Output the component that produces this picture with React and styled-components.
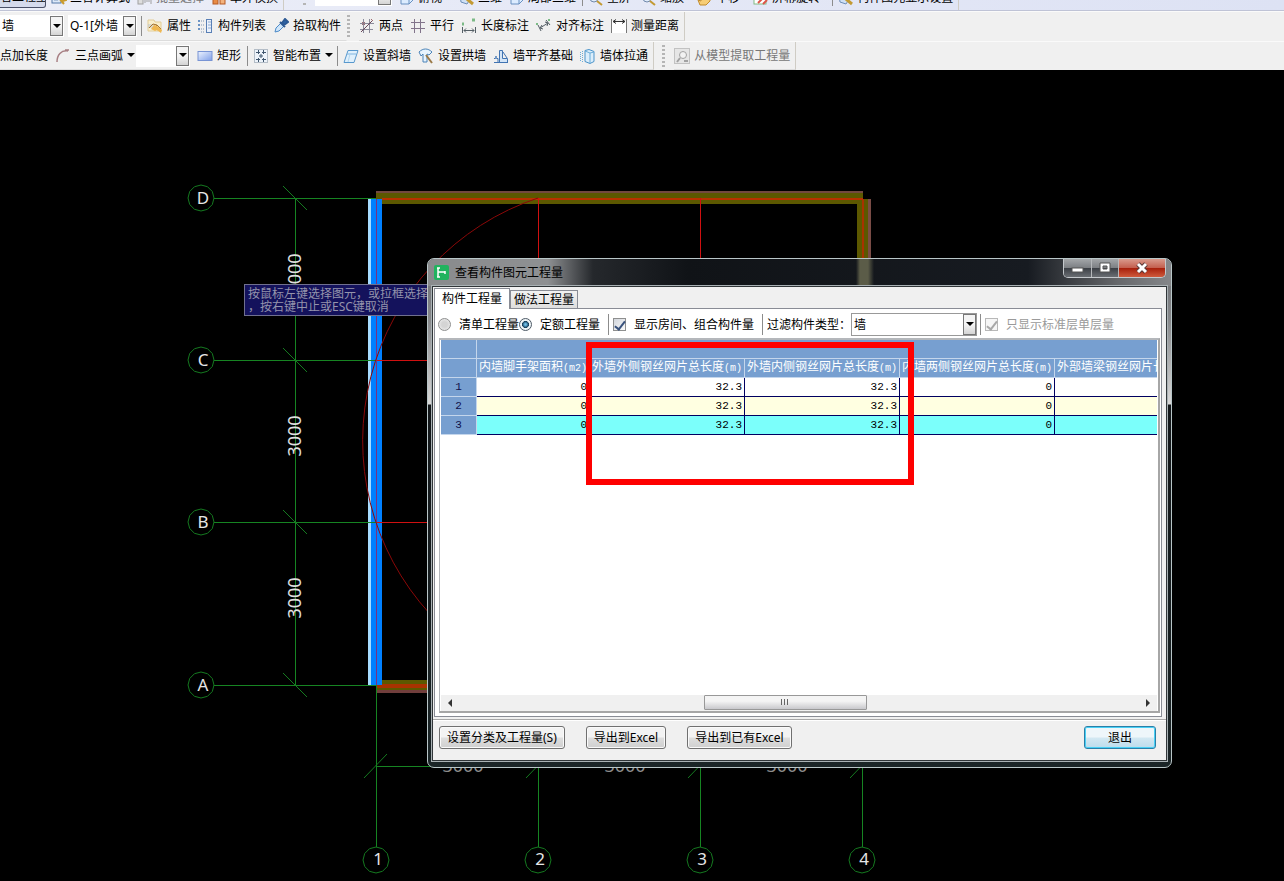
import React, { useState } from "react";
import styled, { createGlobalStyle, css } from "styled-components";

const icons = {
  calc: (
    <>
      <rect x="1" y="4" width="9" height="9" fill="#dce8f8" stroke="#5578a8" />
      <path d="M3 7h5M3 10h4" stroke="#7d97bd" />
      <path d="M8 8l5 6M13 8l2 2-3 1z" stroke="#c99a2c" fill="#f2cf62" strokeWidth="2" />
    </>
  ),
  batch: (
    <>
      <rect x="1" y="8" width="5" height="6" fill="#ddd" stroke="#a0a0a0" />
      <path d="M8 13V9h6v5M9 11h4" stroke="#a0a0a0" fill="none" />
    </>
  ),
  swap: (
    <>
      <rect x="2" y="7" width="5" height="7" fill="#e88b45" stroke="#b65a25" />
      <rect x="9" y="9" width="5" height="5" fill="#f3b37e" stroke="#b65a25" />
    </>
  ),
  cube: <path d="M2 6l5-3h7v7l-4 4H2zM2 6h8v8M10 6l4-3" fill="#dcecff" stroke="#6890c0" />,
  view: (
    <>
      <path d="M1 5l6-2 6 3-5 8-6-2z" fill="#cfe0f5" stroke="#6d8eb8" />
      <path d="M8 9l6 5" stroke="#c39a33" strokeWidth="3" />
    </>
  ),
  magnify: (
    <>
      <circle cx="6" cy="8" r="4" fill="#e2edfa" stroke="#7088ab" />
      <path d="M9 11l5 4" stroke="#c39a33" strokeWidth="2" />
    </>
  ),
  hand: <path d="M3 15l-2-5 3 1V4h2v4l2-5 2 1-1 4 4-2v5l-4 4z" fill="#f6cd76" stroke="#c18b2c" />,
  spin: (
    <>
      <rect x="1" y="5" width="12" height="9" fill="#fff" stroke="#82ba83" />
      <path d="M5 13l8-8M10 14l4-4" stroke="#dd5548" strokeWidth="2" />
    </>
  ),
  property: (
    <>
      <path d="M1 2h6l1 2h6v9H1z" fill="#f9efcd" stroke="#e2cd98" />
      <path d="M1 7h8M1 9h7" stroke="#b9c3ce" />
      <path d="M2 10l4-4 4 1 4 4M10 7l-2 3 3 2" stroke="#a9742a" />
      <path d="M4 11l3-4 3 1 5 4-1 3-4-3-2 1z" fill="#efb750" />
    </>
  ),
  list: (
    <>
      <path d="M0 3h2M0 7h2M0 11h2" stroke="#6b93c4" strokeWidth="2" />
      <path d="M3 3h4M3 7h4M3 11h4M3 14h4" stroke="#7f96b4" strokeDasharray="1 1" />
      <rect x="8.5" y="1.5" width="5" height="13" fill="#eaf1fb" stroke="#5a80b6" />
      <path d="M10 4h3M10 7h3M10 10h3" stroke="#8fabd2" />
    </>
  ),
  picker: (
    <>
      <path d="M2 14l1-4 5-5 3 3-5 5z" fill="#cfe6fb" stroke="#4d8bc8" />
      <path d="M7 4l5 5M9 5l3-4 3 3-4 3z" fill="#2d64a8" stroke="#2d5a94" strokeWidth="2" />
    </>
  ),
  twoPoint: (
    <>
      <path d="M4.5 1v14M10.5 1v14M1 5.5h14M1 11.5h13" stroke="#8b8b9b" />
      <path d="M2 14L13 3" stroke="#6b4a5c" />
      <path d="M3 4l3 3M6 4L3 7M12 1l2 2" stroke="#9c6a70" />
    </>
  ),
  parallel: <path d="M4.5 1v14M10.5 1v14M1 4.5h14M1 10.5h14" stroke="#82748b" />,
  lengthDim: (
    <>
      <path d="M1.5 9v6M14.5 9v6M3 12.5h10M5 10.5l-2 2 2 2M11 10.5l2 2-2 2" stroke="#555f66" />
      <path d="M1 6h2M11 2h3" stroke="#7cba86" strokeWidth="3" />
    </>
  ),
  alignDim: (
    <>
      <path d="M2 7l3 6M10 2l4 5M4 10l8-5M6 7l-2 3 3 1M9 4l3 1-1 3" stroke="#555f66" />
      <path d="M0 6h2M12 2h2" stroke="#7cba86" strokeWidth="2" />
    </>
  ),
  measure: (
    <>
      <rect x="1" y="3" width="14" height="12" fill="#fff" />
      <path d="M0.5 1v14M15.5 1v14" stroke="#777" />
      <path d="M2 3.5h12M5 1.5l-3 2 3 2M11 1.5l3 2-3 2" stroke="#333" />
    </>
  ),
  arc: <path d="M2 14C2 7 6 2 13 3M10 2h4" stroke="#a77f83" strokeWidth="1.5" />,
  rect: <rect x="1" y="3.5" width="14" height="9" fill="url(#blueFill)" stroke="#7894d4" />,
  smart: (
    <>
      <rect x="1.5" y="1.5" width="13" height="13" fill="#edf3fa" stroke="#788899" strokeDasharray="1 1" />
      <path d="M5.5 2v4M3 4.5h4M10.5 2v4M9 4.5h4M5.5 10v4M3 11.5h4M10.5 10v4M9 11.5h4M8 6v4M6 8h4" stroke="#40566e" />
    </>
  ),
  slant: (
    <>
      <path d="M5 2.5h10l-4 12H1z" fill="#dff0fc" stroke="#5898cd" />
      <path d="M4 6h9" stroke="#7fb4df" />
      <path d="M7 6L5 14" stroke="#b4d6f0" />
    </>
  ),
  arch: (
    <>
      <path d="M1 4c4-4 9-4 13 0l-3 3-2-1v8H5V6L3 8z" fill="#e8f4fd" stroke="#4a83b8" />
      <path d="M8 7l6 8" stroke="#9a7a48" strokeWidth="2" />
    </>
  ),
  level: (
    <>
      <path d="M6.5 2.5h3v8h5v4h-8z" fill="#d3e5f7" stroke="#4174b2" />
      <path d="M1 14.5h14M1 10.5h4v4M10 4l4 6" stroke="#4174b2" />
      <path d="M3 8v3" stroke="#7399c6" strokeWidth="2" />
    </>
  ),
  through: (
    <>
      <path d="M5 2.5l4-1 5 2v10l-4 2-5-2z" fill="#dceefb" stroke="#4b93c9" />
      <path d="M10 5v10M5 3l5 2 4-1" stroke="#69add9" />
      <path d="M2.5 3v11M0.5 4v9" stroke="#69add9" strokeDasharray="1 1" />
    </>
  ),
  extract: (
    <>
      <rect x="0.5" y="0.5" width="15" height="15" fill="#e6e6e6" stroke="#c2c2c2" />
      <circle cx="9" cy="7" r="3.5" fill="#f2f2f2" stroke="#a2a2a2" />
      <path d="M6 10l-3 4M10 13h4" stroke="#a2a2a2" strokeWidth="2" />
    </>
  ),
};

const Tool = ({ icon, label, disabled, after, caret }) => (
  <ToolButton type="button" disabled={disabled} $after={after}>
    {icon && (
      <ToolIcon viewBox="0 0 16 16" aria-hidden="true">
        {icons[icon]}
      </ToolIcon>
    )}
    {label}
    {caret && <Caret viewBox="0 0 8 5" aria-hidden="true"><path d="M0 0h8L4 4z" /></Caret>}
  </ToolButton>
);

const Combo = ({ label, value, width, height = 22 }) => (
  <ComboBox $width={width} $height={height}>
    <select aria-label={label} defaultValue={value}>
      <option>{value}</option>
    </select>
    <ComboArrow>
      <Caret viewBox="0 0 8 5" aria-hidden="true"><path d="M0 0h8L4 4z" /></Caret>
    </ComboArrow>
  </ComboBox>
);

const rowAxes = [
  { name: "D", y: 198 },
  { name: "C", y: 360 },
  { name: "B", y: 522 },
  { name: "A", y: 685 },
];

const columnAxes = [
  { name: "1", x: 376 },
  { name: "2", x: 538 },
  { name: "3", x: 700 },
  { name: "4", x: 862 },
];

const bubble = (x, y) =>
  Array.from({ length: 12 }, (_, i) => {
    const a = (i * Math.PI) / 6;
    return `${(x + 13 * Math.cos(a)).toFixed(1)},${(y + 13 * Math.sin(a)).toFixed(1)}`;
  }).join(" ");

const Drawing = () => (
  <DrawingSvg>
    <g transform="translate(0 -70)">
      {/* walls */}
      <rect x="376" y="191" width="487" height="13" fill="#5c5800" />
      <rect x="376" y="191" width="487" height="2" fill="#734840" />
      <rect x="857" y="199" width="14" height="60" fill="#5c5800" />
      <rect x="868" y="199" width="3" height="60" fill="#7a4c46" />
      <rect x="862" y="199" width="2" height="60" fill="#a83200" />
      <rect x="376" y="680" width="60" height="13" fill="#5c5800" />
      <rect x="376" y="684" width="60" height="4" fill="#a83200" />
      <rect x="376" y="690" width="60" height="3" fill="#713e3c" />
      <rect x="368" y="199" width="3" height="486" fill="#a8dcff" />
      <rect x="371" y="199" width="11" height="486" fill="#0080ff" />

      <g fill="none" stroke="#168422" shapeRendering="crispEdges">
        {rowAxes.map(({ name, y }) => (
          <path key={name} d={`M214 ${y}.5H376`} />
        ))}
        <path d="M295.5 198V685M376 766.5H862" />
        {columnAxes.map(({ name, x }) => (
          <path key={name} d={`M${x}.5 ${x === 376 ? 685 : 766}V847`} />
        ))}
      </g>
      <g fill="none" stroke="#157a20">
        {rowAxes.map(({ name, y }) => (
          <path key={name} d={`M283 ${y - 12}l24 24`} />
        ))}
        {columnAxes.map(({ name, x }) => (
          <path key={name} d={`M${x - 12} 778l23-24`} />
        ))}
        {rowAxes.map(({ name, y }) => (
          <polygon key={name} points={bubble(201, y)} />
        ))}
        {columnAxes.map(({ name, x }) => (
          <polygon key={name} points={bubble(x, 860)} />
        ))}
      </g>
      <g fill="none" stroke="#d01010" shapeRendering="crispEdges">
        <path d="M382 199H863" stroke="#b83200" strokeWidth="2" />
        <path d="M538.5 198V262M700.5 198V262M376 360.5H430M376 522.5H430" />
        <path d="M376.5 199V685" stroke="#7a3080" />
      </g>
      <path d="M538 198A256 256 0 0 0 430 614" fill="none" stroke="#8b0808" />

      {rowAxes.map(({ name, y }) => (
        <AxisText key={name} x="203" y={y + 6}>{name}</AxisText>
      ))}
      {columnAxes.map(({ name, x }) => (
        <AxisText key={name} x={x + 2} y="865">{name}</AxisText>
      ))}
      {[274, 436, 598].map((y) => (
        <DimText key={y} transform={`translate(301 ${y}) rotate(-90)`}>3000</DimText>
      ))}
      {[463, 625, 787].map((x) => (
        <DimText key={x} x={x} y="772" $dim>3000</DimText>
      ))}
    </g>
  </DrawingSvg>
);

const columns = [
  { title: "内墙脚手架面积", unit: "(m2)", value: "0", width: 113 },
  { title: "外墙外侧钢丝网片总长度", unit: "(m)", value: "32.3", width: 155 },
  { title: "外墙内侧钢丝网片总长度", unit: "(m)", value: "32.3", width: 155 },
  { title: "内墙两侧钢丝网片总长度", unit: "(m)", value: "0", width: 155 },
  { title: "外部墙梁钢丝网片长度", unit: "(m)", value: "", width: 155 },
];

const QuantityDialog = () => {
  const [mode, setMode] = useState("quota");
  const [showRooms, setShowRooms] = useState(true);

  return (
    <Dialog role="dialog" aria-labelledby="dialog-title">
      <TitleBar>
        <svg width="15" height="15" viewBox="0 0 15 15" aria-hidden="true">
          <rect width="15" height="15" rx="2" fill="#20b35e" />
          <path d="M4 3v9M4 7h7M3 3h3M3 12h3M11 6v3" stroke="#fff" strokeWidth="1.5" />
        </svg>
        <h1 id="dialog-title">查看构件图元工程量</h1>
        <WindowButtons>
          <WindowButton type="button" aria-label="最小化" $width={28}>
            <svg width="14" height="12"><rect x="1" y="6" width="11" height="4" fill="#fff" stroke="#555" /></svg>
          </WindowButton>
          <WindowButton type="button" aria-label="最大化" $width={27}>
            <svg width="14" height="12">
              <path fillRule="evenodd" d="M2 1h10v9H2zM5 4h4v3H5z" fill="#fff" stroke="#555" />
            </svg>
          </WindowButton>
          <WindowButton type="button" aria-label="关闭" $width={46} $close>
            <svg width="14" height="12">
              <path d="M3 2l8 8M11 2l-8 8" stroke="#5c3a38" strokeWidth="5" />
              <path d="M3 2l8 8M11 2l-8 8" stroke="#fff" strokeWidth="3" />
            </svg>
          </WindowButton>
        </WindowButtons>
      </TitleBar>
      <Body>
        <Tabs role="tablist">
          <Tab type="button" role="tab" aria-selected="true" $active>构件工程量</Tab>
          <Tab type="button" role="tab" aria-selected="false">做法工程量</Tab>
        </Tabs>
        <Panel role="tabpanel">
          <Options>
            <Option>
              <Radio type="radio" name="mode" checked={mode === "list"} onChange={() => setMode("list")} />
              清单工程量
            </Option>
            <Option>
              <Radio type="radio" name="mode" checked={mode === "quota"} onChange={() => setMode("quota")} />
              定额工程量
            </Option>
            <OptionDivider />
            <Option>
              <Check type="checkbox" checked={showRooms} onChange={() => setShowRooms(!showRooms)} />
              显示房间、组合构件量
            </Option>
            <OptionDivider />
            <span>过滤构件类型：</span>
            <FilterCombo>
              <Combo label="过滤构件类型" value="墙" width={126} height={23} />
            </FilterCombo>
            <OptionDivider $tight />
            <Option $disabled>
              <Check type="checkbox" checked disabled readOnly />
              只显示标准层单层量
            </Option>
          </Options>
          <GridFrame>
            <GridView>
              <Grid>
                <colgroup>
                  <Col $width={36} />
                  {columns.map((c) => <Col key={c.title} $width={c.width} />)}
                </colgroup>
                <thead>
                  <tr>
                    <th />
                    <th colSpan={columns.length} />
                  </tr>
                  <tr>
                    <th />
                    {columns.map((c) => (
                      <th key={c.title}>{c.title}<Mono>{c.unit}</Mono></th>
                    ))}
                  </tr>
                </thead>
                <tbody>
                  {["#ffffff", "#ffffe1", "#7bfffb"].map((color, i) => (
                    <Row key={color} $color={color}>
                      <th scope="row">{i + 1}</th>
                      {columns.map((c) => <td key={c.title}>{c.value}</td>)}
                    </Row>
                  ))}
                </tbody>
              </Grid>
            </GridView>
            <ScrollBar>
              <ScrollButton type="button" aria-label="向左滚动">
                <svg width="5" height="8"><path d="M5 0v8L1 4z" fill="#333" /></svg>
              </ScrollButton>
              <Track>
                <Thumb>
                  <svg width="10" height="7"><path d="M1.5 0v6M4.5 0v6M7.5 0v6" stroke="#666" /></svg>
                </Thumb>
              </Track>
              <ScrollButton type="button" aria-label="向右滚动">
                <svg width="5" height="8"><path d="M0 0v8l4-4z" fill="#333" /></svg>
              </ScrollButton>
            </ScrollBar>
          </GridFrame>
        </Panel>
        <Footer>
          <PushButton type="button">设置分类及工程量(S)</PushButton>
          <PushButton type="button">导出到Excel</PushButton>
          <PushButton type="button">导出到已有Excel</PushButton>
          <PushButton type="button" $primary>退出</PushButton>
        </Footer>
      </Body>
    </Dialog>
  );
};

const App = () => (
  <Page>
    <GlobalStyle />
    <HiddenDefs aria-hidden="true">
      <linearGradient id="blueFill" x2="1" y2="1">
        <stop offset="0" stopColor="#eef4ff" />
        <stop offset="1" stopColor="#7f9fe8" />
      </linearGradient>
    </HiddenDefs>
    <header>
      <TopBar>
        <ToolGroup $clipped>
          <ActiveTool type="button">看工程量</ActiveTool>
          <Tool icon="calc" label="三合计算式" />
          <Tool icon="batch" label="批量选择" disabled />
          <Tool icon="swap" label="单外模换" />
        </ToolGroup>
        <Grip $left={19} />
        <ToolGroup $clipped>
          <Combo label="视图" value="俯视图" width={77} />
          <Tool icon="cube" label="俯视" after={10} />
          <Tool icon="view" label="三维" />
          <Tool icon="cube" label="局部三维" />
          <Divider />
          <Tool icon="magnify" label="全屏" after={3} />
          <Tool icon="magnify" label="缩放" after={6} />
          <Tool icon="hand" label="平移" after={6} />
          <Tool icon="spin" label="屏幕旋转" after={6} />
          <Divider />
          <Tool icon="view" label="构件图元显示设置" />
        </ToolGroup>
      </TopBar>
      <ToolBar>
        <ToolGroup>
          <Selectors>
            <Combo label="构件类型" value="墙" width={64} />
            <Combo label="构件" value="Q-1[外墙" width={69} />
          </Selectors>
          <Divider $tight />
          <Tool icon="property" label="属性" />
          <Tool icon="list" label="构件列表" />
          <Tool icon="picker" label="拾取构件" />
        </ToolGroup>
        <Grip />
        <ToolGroup $edge>
          <Tool icon="twoPoint" label="两点" />
          <Tool icon="parallel" label="平行" />
          <Tool icon="lengthDim" label="长度标注" />
          <Tool icon="alignDim" label="对齐标注" />
          <Tool icon="measure" label="测量距离" />
        </ToolGroup>
      </ToolBar>
      <ToolBar>
        <ToolGroup $edge>
          <Tool label="点加长度" />
          <Selectors $tight>
            <Tool icon="arc" label="三点画弧" caret />
            <Combo label="画弧参数" value="" width={54} />
          </Selectors>
          <Tool icon="rect" label="矩形" />
          <Divider />
          <Tool icon="smart" label="智能布置" caret />
          <Divider $tight />
          <Tool icon="slant" label="设置斜墙" />
          <Tool icon="arch" label="设置拱墙" />
          <Tool icon="level" label="墙平齐基础" />
          <Tool icon="through" label="墙体拉通" />
        </ToolGroup>
        <Grip $left={8} />
        <ToolGroup $edge>
          <Tool icon="extract" label="从模型提取工程量" disabled />
        </ToolGroup>
      </ToolBar>
    </header>
    <Canvas>
      <Drawing />
      <Hint>
        按鼠标左键选择图元，或拉框选择
        <br />
        ，按右键中止或ESC键取消
      </Hint>
      <QuantityDialog />
      <Highlight />
    </Canvas>
  </Page>
);

const GlobalStyle = createGlobalStyle`
  * {
    box-sizing: border-box;
  }

  body {
    margin: 0;
    background: #000;
  }

  body, button, select, input {
    font-family: "Noto Sans", "Noto Sans CJK SC", sans-serif;
    font-size: 12px;
    line-height: 16px;
    color: #000;
  }
`;

const Page = styled.div`
  display: flex;
  flex-direction: column;
  min-height: 100vh;
  overflow: hidden;
`;

const HiddenDefs = styled.svg`
  position: absolute;
  width: 0;
  height: 0;
`;

const TopBar = styled.div`
  display: flex;
  height: 11px;
  overflow: hidden;
  background: linear-gradient(to right, #eceef8, #dde2f4);
  border-bottom: 1px solid #bfc3d6;
`;

const ToolBar = styled.div`
  display: flex;
  height: 30px;
  background: #f0f0f0;
  border-top: 1px solid #fafafa;

  &:last-child {
    height: 29px;
  }
`;

const ToolGroup = styled.div`
  display: flex;
  align-items: ${({ $clipped }) => ($clipped ? "flex-end" : "center")};
  flex-shrink: 0;
  gap: 7px;
  padding-right: 5px;
  padding-bottom: ${({ $clipped }) => ($clipped ? "4px" : 0)};
  border-right: 1px solid ${({ $edge, $clipped }) => ($edge || $clipped ? "#cfccc4" : "transparent")};
  border-bottom: ${({ $clipped }) => ($clipped ? 0 : "1px solid #dcdcdc")};

  button {
    gap: ${({ $clipped }) => ($clipped ? "3px" : "4px")};
  }
`;

const ToolButton = styled.button`
  display: flex;
  align-items: center;
  flex-shrink: 0;
  margin-right: ${({ $after }) => $after || 0}px;
  padding: 0;
  border: 0;
  background: none;
  white-space: nowrap;

  &:disabled {
    color: #777;
  }
`;

const ActiveTool = styled(ToolButton)`
  width: 46px;
  margin-right: -2px;
  margin-bottom: -2px;
  padding-bottom: 2px;
  border: 1px solid #4a5068;
  border-left: 0;
  border-radius: 0 0 3px 0;
  background: #d5daec;
  overflow: hidden;
`;

const ToolIcon = styled.svg`
  width: 16px;
  height: 16px;
  fill: none;
`;

const Caret = styled.svg`
  width: 8px;
  height: 5px;
  fill: #000;
`;

const Divider = styled.span`
  width: 1px;
  height: 20px;
  margin: 0 -2px 0 ${({ $tight }) => ($tight ? "-3px" : "-1px")};
  background: #8c8c8c;
`;

const Grip = styled.span`
  width: 3px;
  flex-shrink: 0;
  margin: 3px 9px 3px ${({ $left }) => $left || 0}px;
  background: repeating-linear-gradient(#b5b5b5 0 2px, transparent 2px 4px);
`;

const Selectors = styled.div`
  display: flex;
  align-items: center;
  gap: ${({ $tight }) => ($tight ? 1 : 4)}px;
`;

const ComboBox = styled.div`
  position: relative;
  flex-shrink: 0;
  width: ${({ $width }) => $width}px;
  height: ${({ $height }) => $height}px;

  select {
    appearance: none;
    width: 100%;
    height: 100%;
    padding: 0 14px 0 2px;
    border: 0;
    border-radius: 0;
    background: #fff;
  }
`;

const ComboArrow = styled.span`
  position: absolute;
  top: 1px;
  right: 1px;
  bottom: 1px;
  display: flex;
  align-items: center;
  justify-content: center;
  width: 13px;
  border: 1px solid #777;
  background: linear-gradient(#f4f4f4 50%, #d4d4d4);
  pointer-events: none;
`;

const FilterCombo = styled.div`
  select {
    border: 1px solid #999;
  }
`;

const Canvas = styled.main`
  position: relative;
  flex: 1;
  min-height: 720px;
  overflow: hidden;
  background: #000;
`;

const DrawingSvg = styled.svg`
  position: absolute;
  width: 100%;
  height: 100%;
`;

const AxisText = styled.text`
  fill: #e6e6e6;
  font-size: 17px;
  text-anchor: middle;
`;

const DimText = styled.text`
  fill: ${({ $dim }) => ($dim ? "#8c8c8c" : "#e0e0e0")};
  font-size: 18px;
  text-anchor: middle;
`;

const Hint = styled.div`
  position: absolute;
  top: 214px;
  left: 244px;
  padding: 2px 3px;
  border: 1px solid #70708e;
  background: #14125c;
  color: #9494ac;
  line-height: 13px;
  white-space: nowrap;
`;

const Dialog = styled.section`
  position: absolute;
  top: 188px;
  left: 427px;
  width: 745px;
  padding: 0 4px 6px;
  border: 1px solid #b9c6c8;
  border-radius: 7px;
  background: linear-gradient(#6a6c70, #85878a 60px, #d8d8d8 145px, #14181b 146px, #1b2527);
`;

const TitleBar = styled.div`
  display: flex;
  align-items: center;
  gap: 6px;
  height: 27px;
  margin: 0 -4px;
  padding-left: 6px;
  border-radius: 6px 6px 0 0;
  background:
    linear-gradient(to right, transparent 428px, #5b5c48 432px 440px, transparent 446px),
    linear-gradient(to right, #898b8d, #8e9092 120px, #25282c 165px, #101317 260px, #171b21 600px, #66686b 690px, #85878a);

  h1 {
    margin: 0;
    font-size: 12px;
    font-weight: 400;
    line-height: 16px;
  }
`;

const WindowButtons = styled.div`
  display: flex;
  align-self: flex-start;
  margin-left: auto;
  margin-right: 5px;
  border: 1px solid #c4c8cc;
  border-top: 0;
  border-radius: 0 0 5px 5px;
  overflow: hidden;
`;

const WindowButton = styled.button`
  display: flex;
  align-items: center;
  justify-content: center;
  width: ${({ $width }) => $width}px;
  height: 18px;
  padding: 0;
  border: 0;
  border-right: ${({ $close }) => ($close ? 0 : "1px solid #b5b8bb")};
  background: ${({ $close }) =>
    $close
      ? "linear-gradient(#d99a8c, #c4604f 48%, #a8200c 52%, #cf5a3c)"
      : "linear-gradient(#a3a6a9, #7d8084 48%, #3c4046 52%, #6a6e73)"};

  svg {
    fill: none;
  }
`;

const Body = styled.div`
  border: 1px solid #303538;
  box-shadow: 0 0 0 1px #a9b1b4;
  background: #f0f0f0;
`;

const Tabs = styled.div`
  display: flex;
  align-items: flex-end;
  height: 21px;
  padding-left: 1px;
`;

const Tab = styled.button`
  height: 18px;
  padding: 0 3px;
  border: 1px solid #898c95;
  border-bottom: 0;
  background: linear-gradient(#f2f2f2, #dedede);

  ${({ $active }) =>
    $active &&
    css`
      position: relative;
      z-index: 1;
      height: 21px;
      margin-bottom: -1px;
      padding: 0 7px 1px;
      background: #fff;
    `}
`;

const Panel = styled.div`
  margin: 0 4px 2px 1px;
  padding: 4px 1px 3px 4px;
  border: 1px solid #898c95;
  background: #fff;
`;

const Options = styled.div`
  display: flex;
  align-items: center;
  height: 23px;
  margin-bottom: 2px;
  margin-left: -1px;
  white-space: nowrap;
`;

const Option = styled.label`
  display: flex;
  align-items: center;
  gap: 8px;
  color: ${({ $disabled }) => ($disabled ? "#9a9a9a" : "#000")};
`;

const OptionDivider = styled.span`
  width: 1px;
  height: 21px;
  margin: 0 4px 0 ${({ $tight }) => ($tight ? 3 : 8)}px;
  background: #8c8c8c;
`;

const Radio = styled.input`
  appearance: none;
  width: 13px;
  height: 13px;
  margin: 0;
  border: 1px solid #8e8f8f;
  border-radius: 50%;
  background: radial-gradient(#d4d4d4 35%, #f6f6f6);

  &:checked {
    border-color: #4e5a66;
    background: radial-gradient(#6fc1ec 8%, #123a56 42%, #eef4f7 48%);
  }
`;

const Check = styled.input`
  appearance: none;
  display: flex;
  justify-content: center;
  width: 13px;
  height: 13px;
  margin: 0;
  border: 1px solid #8e8f8f;
  background: linear-gradient(135deg, #d2d6dc, #fafafa);

  &:checked::after {
    content: "";
    width: 4px;
    height: 9px;
    border: solid #39527c;
    border-width: 0 2px 2px 0;
    transform: rotate(38deg);
  }

  &:disabled {
    border-color: #b8b8b8;
    background: #f6f6f6;
  }

  &:disabled::after {
    border-color: #a8a8a8;
  }
`;

const GridFrame = styled.div`
  border: 2px solid #b4b7bb;
  border-left-width: 1px;
  border-right-color: #a6a6a6;
  border-bottom-color: #a6a6a6;
  padding: 0 1px;
`;

const GridView = styled.div`
  height: 355px;
  overflow: hidden;
`;

const Grid = styled.table`
  width: 769px;
  table-layout: fixed;
  border-collapse: separate;
  border-spacing: 0;

  th,
  td {
    height: 19px;
    padding: 0 2px;
    white-space: nowrap;
    line-height: 16px;
  }

  th {
    border-right: 1px solid #c4d6ec;
    border-bottom: 1px solid #c4d6ec;
    background: #779fd0;
    color: #fff;
    font-weight: 400;
  }

  thead tr:last-child th {
    text-align: left;
  }

  td {
    border-right: 1px solid #000060;
    border-bottom: 1px solid #000060;
    font-family: "Liberation Mono", monospace;
    font-size: 11px;
    text-align: right;
  }
`;

const Col = styled.col`
  width: ${({ $width }) => $width}px;
`;

const Mono = styled.span`
  font-family: "Liberation Mono", monospace;
  font-size: 10px;
`;

const Row = styled.tr`
  td {
    background: ${({ $color }) => $color};
  }

  && th {
    color: #10104a;
    font-family: "Liberation Mono", monospace;
    font-size: 11px;
  }
`;

const ScrollBar = styled.div`
  display: flex;
  height: 16px;
  background: #f0f0f0;
`;

const ScrollButton = styled.button`
  display: flex;
  align-items: center;
  justify-content: center;
  width: 17px;
  padding: 0;
  border: 0;
  background: none;
`;

const Track = styled.div`
  flex: 1;
  display: flex;
  padding-left: 36%;
`;

const Thumb = styled.div`
  display: flex;
  align-items: center;
  justify-content: center;
  width: 163px;
  height: 15px;
  margin-left: -12px;
  border: 1px solid #989898;
  border-radius: 1px;
  background: linear-gradient(#f4f4f4 40%, #c8c8cc);
`;

const Footer = styled.div`
  display: flex;
  gap: 21px;
  padding: 6px 10px 11px 6px;
  border-top: 1px solid #a8a8a8;
  box-shadow: inset 0 1px #fff;
`;

const PushButton = styled.button`
  height: 23px;
  padding: 0 7px;
  border: 1px solid #707070;
  border-radius: 3px;
  background: linear-gradient(#f3f3f3 48%, #dedede 52%, #cfcfcf);
  box-shadow: inset 0 0 0 1px #fafafa;
  white-space: nowrap;

  ${({ $primary }) =>
    $primary &&
    css`
      width: 72px;
      margin-left: auto;
      border-color: #2a7fa8;
      background: linear-gradient(#eef6fa 48%, #d3e8f2 52%, #bcdcec);
      box-shadow: inset 0 0 0 1px #48d0f5;
    `}
`;

const Highlight = styled.div`
  position: absolute;
  top: 272px;
  left: 586px;
  width: 328px;
  height: 143px;
  border: 6px solid #fe0000;
  pointer-events: none;
`;

export default App;
